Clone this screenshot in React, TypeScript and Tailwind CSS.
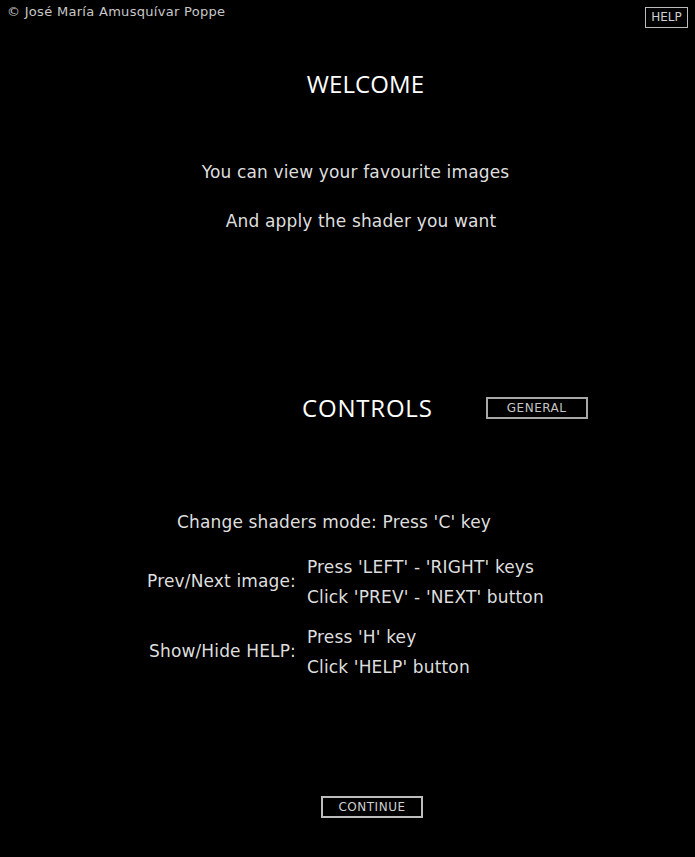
import React from 'react'

const body = { fontFamily: '"DejaVu Sans", sans-serif' }
const title = { fontFamily: '"Open Sans", sans-serif' }

function Row({ label, lines }: { label: string; lines: string[] }) {
  return (
    <div className="flex items-center">
      <div className="w-[297px] text-right pr-[1px]">{label}</div>
      <div className="flex flex-col pl-[10px]">
        {lines.map((l) => (
          <div key={l} className="h-[30px] leading-[30px]">
            {l}
          </div>
        ))}
      </div>
    </div>
  )
}

export default function App() {
  return (
    <div className="w-[695px] h-[857px] bg-black text-[#dedede] flex flex-col tracking-[0.15px]" style={body}>
      <div className="flex justify-between items-start h-[28px]">
        <div className="pl-[7px] pt-[4px] text-[13px] leading-[16px] tracking-[0.3px] text-[#c8c8c8]">© José María Amusquívar Poppe</div>
        <button className="mt-[7px] mr-[7px] w-[43px] h-[21px] border border-[#bdbdbd] text-[12px] leading-[19px] tracking-normal text-[#d0d0d0]">HELP</button>
      </div>
      <div className="mt-[40px] pl-[36px] text-center text-[24px] leading-[32px] tracking-[0.1px] text-white" style={title}>WELCOME</div>
      <div className="mt-[60px] pl-[16px] text-center text-[17px] leading-[24px]">You can view your favourite images</div>
      <div className="mt-[25px] pl-[27px] text-center text-[17px] leading-[24px]">And apply the shader you want</div>
      <div className="mt-[159px] flex items-center h-[32px]">
        <div className="w-[302px]" />
        <div className="text-[24px] leading-[32px] tracking-[0.8px] text-white" style={title}>CONTROLS</div>
        <button className="ml-[53px] w-[102px] h-[22px] border-2 border-[#a8a8a8] text-[12px] leading-[18px] tracking-[0.5px] text-[#c4c4c4]">GENERAL</button>
      </div>
      <div className="mt-[86px] pl-[177px] text-[17px] leading-[24px]">Change shaders mode: Press 'C' key</div>
      <div className="mt-[18px] text-[17px] flex flex-col gap-[10px]">
        <Row label="Prev/Next image:" lines={["Press 'LEFT' - 'RIGHT' keys", "Click 'PREV' - 'NEXT' button"]} />
        <Row label="Show/Hide HELP:" lines={["Press 'H' key", "Click 'HELP' button"]} />
      </div>
      <div className="mt-[114px] flex justify-center">
        <button className="ml-[49px] w-[102px] h-[22px] border-2 border-[#bdbdbd] text-[12px] leading-[18px] tracking-[0.5px] text-[#d0d0d0]">CONTINUE</button>
      </div>
    </div>
  )
}
